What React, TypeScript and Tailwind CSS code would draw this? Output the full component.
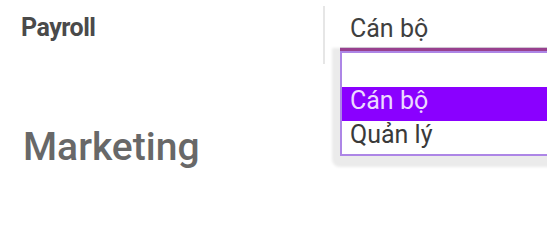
export default function App() {
  return (
    <div
      className="relative w-[547px] h-[210px] overflow-hidden bg-white"
      style={{ fontFamily: "Roboto, 'Noto Sans', sans-serif" }}
    >
      <div className="flex">
        <div className="w-[323px] pl-[21px] pt-[14px]">
          <div className="text-[25px] leading-[28px] font-bold text-[#4a4a4a] tracking-[-0.5px]">
            Payroll
          </div>
        </div>
        <div className="mt-[6px] h-[58px] border-l-2 border-[#e6e6e6] pl-[25px] pt-[8px]">
          <div className="text-[25px] leading-[30px] text-[#3f3f3f]">Cán bộ</div>
        </div>
      </div>
      <div className="pl-[23px] mt-[61px]">
        <div className="text-[39px] leading-[44px] font-medium text-[#686868]">Marketing</div>
      </div>

      <div className="absolute left-[340px] top-[47px] w-[240px] rounded-bl-[3px] shadow-[-3px_6px_3px_5px_#ebebeb]">
        <div className="border-t border-[#cfc4d2]" />
        <div className="border-t-[3px] border-[#98408e]" />
        <div className="border-2 border-[#ad86e6] bg-white">
          <div className="h-[34px]" />
          <div className="h-[34px] bg-[#8a00ff] pl-2 text-[25px] leading-[27px] text-[#ecd9ff]">
            Cán bộ
          </div>
          <div className="h-[33px] pl-2 text-[25px] leading-[27px] text-[#3a3a3a]">Quản lý</div>
        </div>
      </div>
    </div>
  );
}
